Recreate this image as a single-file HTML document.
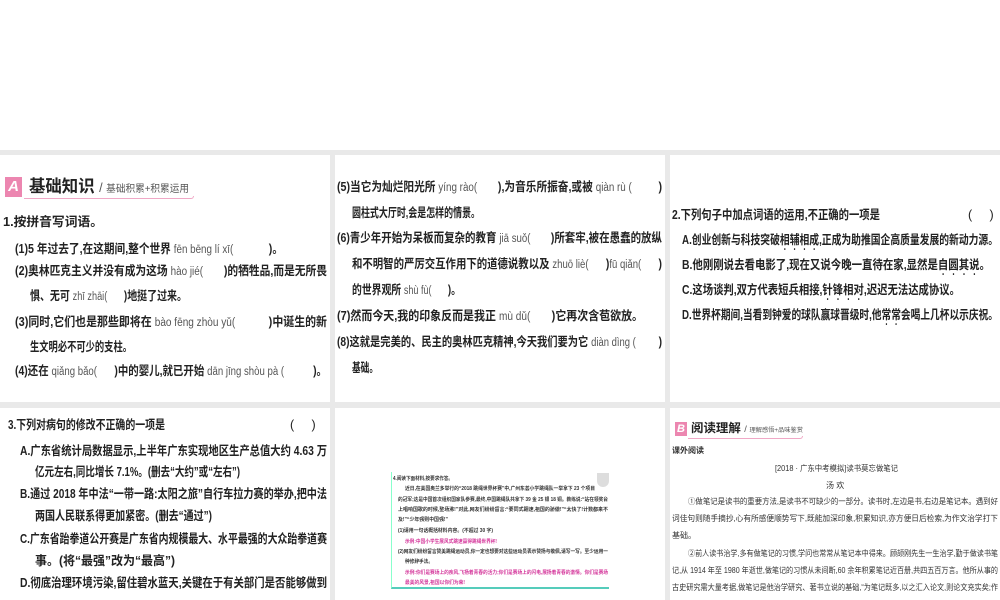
<!DOCTYPE html>
<html><head><meta charset="utf-8"><style>
*{margin:0;padding:0;box-sizing:border-box}
body{width:1000px;height:600px;background:#fff;position:relative;overflow:hidden;font-family:"Liberation Sans","Noto Sans CJK SC",sans-serif;color:#222}
.bg{position:absolute;left:0;top:150px;width:1000px;height:450px;background:#e9e9e9}
.p{position:absolute;background:#fff}
.l{position:absolute;white-space:nowrap;font-size:12.5px;font-weight:bold;line-height:14px;transform-origin:0 50%}
.py{font-weight:normal;color:#555;font-size:11.5px}
.s{position:absolute;white-space:nowrap;font-size:8px;font-weight:bold;line-height:10px;color:#333;transform-origin:0 50%}
.badge{position:absolute;background:#ec86b0;color:#fff;font-weight:bold;font-style:italic;text-align:center}
.dot{text-emphasis:dot;-webkit-text-emphasis:dot;text-emphasis-position:under;-webkit-text-emphasis-position:under}
</style></head><body>
<div class="bg"></div>
<div class="p" style="left:0;top:155px;width:330px;height:247px"></div>
<div class="p" style="left:335px;top:155px;width:330px;height:247px"></div>
<div class="p" style="left:670px;top:155px;width:330px;height:247px"></div>
<div class="p" style="left:0;top:408px;width:330px;height:192px"></div>
<div class="p" style="left:335px;top:408px;width:330px;height:192px"></div>
<div class="p" style="left:670px;top:408px;width:330px;height:192px"></div>

<!-- panel 1 -->
<div class="badge" style="left:5px;top:177px;width:17px;height:20px;font-size:15px;line-height:20px">A</div>
<div style="position:absolute;left:24px;top:196px;width:170px;height:3px;border-bottom:1px solid #f0a8c6;border-right:1px solid #f0a8c6;border-radius:0 0 6px 0"></div>
<div class="l f" style="left:29px;top:177px;font-size:17px;line-height:20px;--w:160">基础知识 <span style="font-weight:normal;font-size:13px;color:#555">/ </span><span style="font-weight:normal;font-size:10px;color:#555">基础积累+积累运用</span></div>
<div class="l f" style="left:3px;top:215px;--w:100">1.按拼音写词语。</div>
<div class="l f" style="left:15px;top:242px;--w:268">(1)5 年过去了,在这期间,整个世界 <span class="py">fēn bēng lí xī(</span>&nbsp;&nbsp;&nbsp;&nbsp;&nbsp;&nbsp;&nbsp;&nbsp;&nbsp;&nbsp;&nbsp;&nbsp;)。</div>
<div class="l f" style="left:15px;top:264px;--w:312">(2)奥林匹克主义并没有成为这场 <span class="py">hào jié(</span>&nbsp;&nbsp;&nbsp;&nbsp;&nbsp;&nbsp;&nbsp;)的牺牲品,而是无所畏</div>
<div class="l f" style="left:30px;top:289px;--w:157">惧、无可 <span class="py">zhī zhāi(</span>&nbsp;&nbsp;&nbsp;&nbsp;&nbsp;&nbsp;)地挺了过来。</div>
<div class="l f" style="left:15px;top:315px;--w:312">(3)同时,它们也是那些即将在 <span class="py">bào fēng zhòu yǔ(</span>&nbsp;&nbsp;&nbsp;&nbsp;&nbsp;&nbsp;&nbsp;&nbsp;&nbsp;&nbsp;&nbsp;)中诞生的新</div>
<div class="l f" style="left:30px;top:340px;--w:102">生文明必不可少的支柱。</div>
<div class="l f" style="left:15px;top:364px;--w:312">(4)还在 <span class="py">qiǎng bǎo(</span>&nbsp;&nbsp;&nbsp;&nbsp;&nbsp;&nbsp;)中的婴儿,就已开始 <span class="py">dān jīng shòu pà (</span>&nbsp;&nbsp;&nbsp;&nbsp;&nbsp;&nbsp;&nbsp;&nbsp;&nbsp;&nbsp;)。</div>

<!-- panel 2 -->
<div class="l f" style="left:337px;top:180px;--w:325">(5)当它为灿烂阳光所 <span class="py">yíng rào(</span>&nbsp;&nbsp;&nbsp;&nbsp;&nbsp;&nbsp;&nbsp;),为音乐所振奋,或被 <span class="py">qiàn rù (</span>&nbsp;&nbsp;&nbsp;&nbsp;&nbsp;&nbsp;&nbsp;&nbsp;&nbsp;)</div>
<div class="l f" style="left:352px;top:206px;--w:128">圆柱式大厅时,会是怎样的情景。</div>
<div class="l f" style="left:337px;top:231px;--w:325">(6)青少年开始为呆板而复杂的教育 <span class="py">jiā suǒ(</span>&nbsp;&nbsp;&nbsp;&nbsp;&nbsp;&nbsp;&nbsp;)所套牢,被在愚蠢的放纵</div>
<div class="l f" style="left:352px;top:257px;--w:310">和不明智的严厉交互作用下的道德说教以及 <span class="py">zhuō liè(</span>&nbsp;&nbsp;&nbsp;&nbsp;&nbsp;&nbsp;)<span class="py">fū qiǎn(</span>&nbsp;&nbsp;&nbsp;&nbsp;&nbsp;&nbsp;)</div>
<div class="l f" style="left:352px;top:283px;--w:109">的世界观所 <span class="py">shù fù(</span>&nbsp;&nbsp;&nbsp;&nbsp;&nbsp;&nbsp;)。</div>
<div class="l f" style="left:337px;top:309px;--w:306">(7)然而今天,我的印象反而是我正 <span class="py">mù dǔ(</span>&nbsp;&nbsp;&nbsp;&nbsp;&nbsp;&nbsp;&nbsp;)它再次含苞欲放。</div>
<div class="l f" style="left:337px;top:335px;--w:325">(8)这就是完美的、民主的奥林匹克精神,今天我们要为它 <span class="py">diàn dìng (</span>&nbsp;&nbsp;&nbsp;&nbsp;&nbsp;&nbsp;&nbsp;&nbsp;)</div>
<div class="l f" style="left:352px;top:361px;--w:26">基础。</div>

<!-- panel 3 -->
<div class="l f" style="left:672px;top:208px;--w:208">2.下列句子中加点词语的运用,不正确的一项是</div>
<div class="l" style="left:968px;top:208px;font-weight:normal">(&nbsp;&nbsp;&nbsp;&nbsp;&nbsp;)</div>
<div class="l f" style="left:682px;top:233px;--w:316">A.创业创新与科技突破<span class="dot">相辅相成</span>,正成为助推国企高质量发展的新动力源。</div>
<div class="l f" style="left:682px;top:258px;--w:308">B.他刚刚说去看电影了,现在又说今晚一直待在家,显然是<span class="dot">自圆其说</span>。</div>
<div class="l f" style="left:682px;top:283px;--w:278">C.这场谈判,双方代表短兵相接,<span class="dot">针锋相对</span>,迟迟无法达成协议。</div>
<div class="l f" style="left:682px;top:308px;--w:316">D.世界杯期间,当看到钟爱的球队赢球晋级时,他<span class="dot">常常</span>会喝上几杯以示庆祝。</div>

<!-- panel 4 -->
<div class="l f" style="left:8px;top:418px;--w:157">3.下列对病句的修改不正确的一项是</div>
<div class="l" style="left:290px;top:418px;font-weight:normal">(&nbsp;&nbsp;&nbsp;&nbsp;&nbsp;)</div>
<div class="l f" style="left:20px;top:444px;--w:307">A.广东省统计局数据显示,上半年广东实现地区生产总值大约 4.63 万</div>
<div class="l f" style="left:35px;top:465px;--w:205">亿元左右,同比增长 7.1%。(删去“大约”或“左右”)</div>
<div class="l f" style="left:20px;top:487px;--w:307">B.通过 2018 年中法“一带一路:太阳之旅”自行车拉力赛的举办,把中法</div>
<div class="l f" style="left:35px;top:509px;--w:177">两国人民联系得更加紧密。(删去“通过”)</div>
<div class="l f" style="left:20px;top:532px;--w:307">C.广东省跆拳道公开赛是广东省内规模最大、水平最强的大众跆拳道赛</div>
<div class="l f" style="left:35px;top:554px;--w:140">事。(将“最强”改为“最高”)</div>
<div class="l f" style="left:20px;top:576px;--w:307">D.彻底治理环境污染,留住碧水蓝天,关键在于有关部门是否能够做到</div>

<!-- panel 5 embedded image -->
<div style="position:absolute;left:391px;top:472px;width:218px;height:117px;border-left:1px solid #8fc;border-bottom:2px solid #5cb;background:#fff"></div>
<div style="position:absolute;left:597px;top:473px;width:12px;height:14px;background:#ddd;border-radius:0 0 6px 6px"></div>
<div class="s f" style="left:393px;top:474px;font-size:5px;--w:60">4.阅读下面材料,按要求作答。</div>
<div class="s f" style="left:405px;top:484px;font-size:5px;--w:190">近日,在美国奥兰多举行的“2018 跳绳世界杯赛”中,广州东荟小学跳绳队一举拿下 23 个项目</div>
<div class="s f" style="left:398px;top:495px;font-size:5px;--w:210">的冠军;这是中国首次组织国家队参赛,最终,中国跳绳队共拿下 39 金 25 银 18 铜。教练说:“站在领奖台</div>
<div class="s f" style="left:398px;top:505px;font-size:5px;--w:210">上唱响国歌的时候,整场沸!”对此,网友们纷纷留言:“要同式翱速,祖国的骄傲!”“太快了!计数都来不</div>
<div class="s f" style="left:398px;top:515px;font-size:5px;--w:50">及!”“少年强则中国强!”</div>
<div class="s f" style="left:398px;top:526px;font-size:5px;--w:95">(1)请用一句话概括材料内容。(不超过 30 字)</div>
<div class="s f" style="left:405px;top:537px;font-size:5px;color:#d4359a;--w:92">示例:中国小学生展风式跳速赢得跳绳世界杯!</div>
<div class="s f" style="left:398px;top:547px;font-size:5px;--w:210">(2)网友们纷纷留言赞美跳绳运动员,你一定也想要对这些运动员表示赞扬与敬佩,请写一写。至少运用一</div>
<div class="s f" style="left:405px;top:557px;font-size:5px;--w:28">种修辞手法。</div>
<div class="s f" style="left:405px;top:568px;font-size:5px;color:#d4359a;--w:203">示例:你们是赛场上的疾风,飞扬着青春的活力;你们是赛场上的闪电,展扬着青春的激情。你们是赛场</div>
<div class="s f" style="left:405px;top:578px;font-size:5px;color:#d4359a;--w:60">最美的风景,祖国以你们为荣!</div>

<!-- panel 6 -->
<div class="badge" style="left:675px;top:422px;width:12px;height:14px;font-size:11px;line-height:14px">B</div>
<div style="position:absolute;left:688px;top:436px;width:115px;height:3px;border-bottom:1px solid #f0a8c6;border-right:1px solid #f0a8c6;border-radius:0 0 5px 0"></div>
<div class="l f" style="left:691px;top:421px;font-size:12px;line-height:15px;--w:112">阅读理解 <span style="font-weight:normal;font-size:9px;color:#555">/ </span><span style="font-weight:normal;font-size:6px;color:#555">理解感悟+品味鉴赏</span></div>
<div class="s" style="left:672px;top:446px">课外阅读</div>
<div class="s f" style="left:775px;top:464px;font-weight:normal;--w:123">[2018 · 广东中考模拟]读书莫忘做笔记</div>
<div class="s" style="left:826px;top:481px;font-weight:normal">汤 欢</div>
<div class="s f" style="left:688px;top:497px;font-weight:normal;--w:310">①做笔记是读书的重要方法,是读书不可缺少的一部分。读书时,左边是书,右边是笔记本。遇到好</div>
<div class="s f" style="left:672px;top:514px;font-weight:normal;--w:326">词佳句则随手摘抄,心有所感便顺势写下,既能加深印象,积累知识,亦方便日后检索,为作文治学打下</div>
<div class="s" style="left:672px;top:531px;font-weight:normal">基础。</div>
<div class="s f" style="left:688px;top:549px;font-weight:normal;--w:310">②前人读书治学,多有做笔记的习惯,学问也常常从笔记本中得来。顾颉刚先生一生治学,勤于做读书笔</div>
<div class="s f" style="left:672px;top:566px;font-weight:normal;--w:326">记,从 1914 年至 1980 年逝世,做笔记的习惯从未间断,60 余年积累笔记近百册,共四五百万言。他所从事的</div>
<div class="s f" style="left:672px;top:583px;font-weight:normal;--w:326">古史研究需大量考据,做笔记是他治学研究、著书立说的基础,“为笔记既多,以之汇入论文,则论文充实矣;作</div>
<script>
document.querySelectorAll('.f').forEach(function(el){
  var w=parseFloat(getComputedStyle(el).getPropertyValue('--w'));
  var n=el.getBoundingClientRect().width;
  if(w&&n){el.style.transform='scaleX('+(w/n)+')';}
});
</script>
</body></html>
